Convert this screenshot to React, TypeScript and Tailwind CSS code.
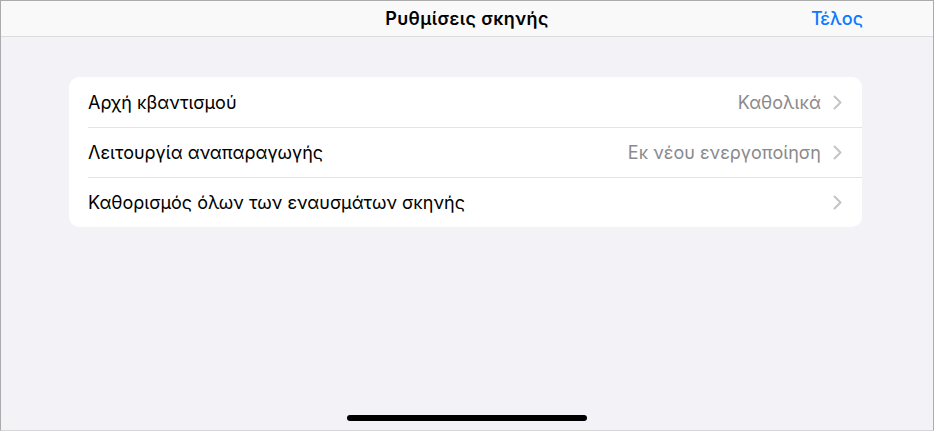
function Chevron() {
  return (
    <svg width="9" height="15" viewBox="0 0 9 15" className="shrink-0" fill="none">
      <path d="M1.5 1.5 L7.5 7.5 L1.5 13.5" stroke="#c4c4c7" strokeWidth="2" strokeLinecap="round" strokeLinejoin="round" />
    </svg>
  );
}

const rows = [
  { label: 'Αρχή κβαντισμού', value: 'Καθολικά' },
  { label: 'Λειτουργία αναπαραγωγής', value: 'Εκ νέου ενεργοποίηση' },
  { label: 'Καθορισμός όλων των εναυσμάτων σκηνής', value: '' },
];

export default function App() {
  return (
    <div
      className="w-[934px] h-[431px] flex flex-col bg-[#f2f2f7] border border-[#ababab] border-b-[#d6d6d6] overflow-hidden"
      style={{ fontFamily: 'Inter, "Noto Sans", sans-serif' }}
    >
      {/* Nav bar */}
      <div className="h-[36px] shrink-0 relative flex items-center justify-center bg-[#f9f9f9] border-b border-[#dcdcdf]">
        <span className="text-[18px] font-semibold text-black tracking-[0.4px]">Ρυθμίσεις σκηνής</span>
        <span className="absolute right-[70px] text-[18px] font-medium text-[#0a7aff]">Τέλος</span>
      </div>

      {/* Settings group */}
      <div className="mt-[40px] ml-[68px] w-[793px] bg-white rounded-[10px] overflow-hidden">
        {rows.map((row, i) => (
          <div key={row.label} className="h-[50px] flex items-center pl-[19px]">
            <div
              className={
                'h-full flex-1 flex items-center pr-[20px] ' +
                (i > 0 ? 'border-t border-[#e4e4e7]' : '')
              }
            >
              <span className="flex-1 text-[18px] text-black">{row.label}</span>
              {row.value && (
                <span className="text-[18px] text-[#8a8a8e] mr-[12px]">{row.value}</span>
              )}
              <Chevron />
            </div>
          </div>
        ))}
      </div>

      {/* Home indicator */}
      <div className="mt-auto mb-[9px] flex justify-center">
        <div className="w-[240px] h-[6px] rounded-full bg-black" />
      </div>
    </div>
  );
}
